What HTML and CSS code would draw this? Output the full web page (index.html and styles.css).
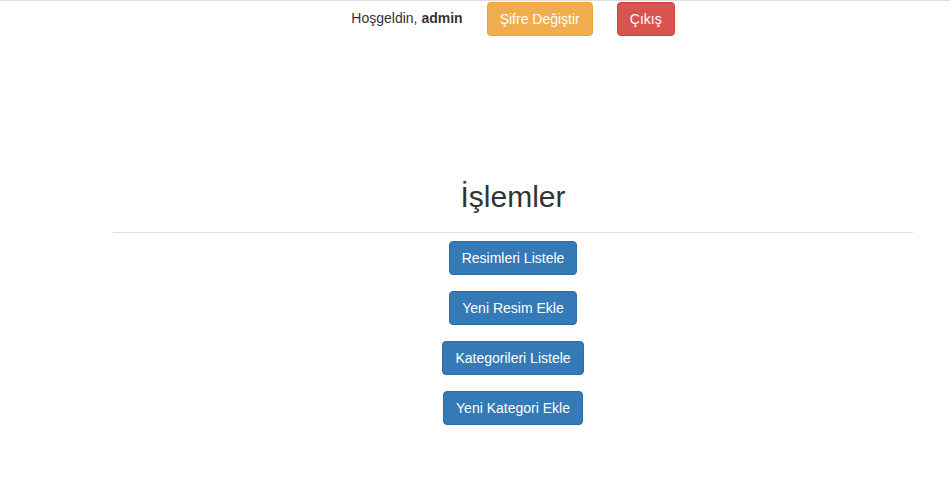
FILE: index.html
```html
<!DOCTYPE html>
<html lang="tr">
<head>
<meta charset="utf-8">
<title>İşlemler</title>
<link rel="stylesheet" href="styles.css">
</head>
<body>
<div class="page">
  <div class="topbar">
    <span class="welcome">Hoşgeldin, <b>admin</b></span>
    <a class="btn btn-warning" href="#">Şifre Değiştir</a>
    <a class="btn btn-danger" href="#">Çıkış</a>
  </div>
  <h2 class="title">İşlemler</h2>
  <hr class="divider">
  <div class="actions">
    <a class="btn btn-primary" href="#">Resimleri Listele</a>
    <a class="btn btn-primary" href="#">Yeni Resim Ekle</a>
    <a class="btn btn-primary" href="#">Kategorileri Listele</a>
    <a class="btn btn-primary" href="#">Yeni Kategori Ekle</a>
  </div>
</div>
</body>
</html>
```
FILE: styles.css
```css
html, body {
  margin: 0;
  padding: 0;
  background: #fff;
}
body {
  font-family: "Liberation Sans", Arial, sans-serif;
  font-size: 14px;
  line-height: 1.42857;
  color: #333;
  border-top: 1px solid #dedede;
}
.page {
  width: 800px;
  margin-left: 113px;
}
.topbar {
  display: flex;
  justify-content: center;
  align-items: center;
  gap: 24px;
  padding-top: 1px;
}
.welcome b {
  font-weight: bold;
}
.btn {
  display: inline-block;
  padding: 6px 12px;
  font-size: 14px;
  line-height: 20px;
  border: 1px solid transparent;
  border-radius: 4px;
  color: #fff;
  text-decoration: none;
  white-space: nowrap;
}
.btn-warning {
  background: #f0ad4e;
  border-color: #eea236;
}
.btn-danger {
  background: #d9534f;
  border-color: #d43f3a;
}
.btn-primary {
  background: #337ab7;
  border-color: #2e6da4;
}
.title {
  font-size: 30px;
  font-weight: 500;
  line-height: 33px;
  text-align: center;
  margin: 144px 0 0;
}
.divider {
  border: 0;
  border-top: 1px solid #ddd;
  margin: 19px 0 8px;
}
.actions {
  display: flex;
  flex-direction: column;
  align-items: center;
  gap: 16px;
}
```
